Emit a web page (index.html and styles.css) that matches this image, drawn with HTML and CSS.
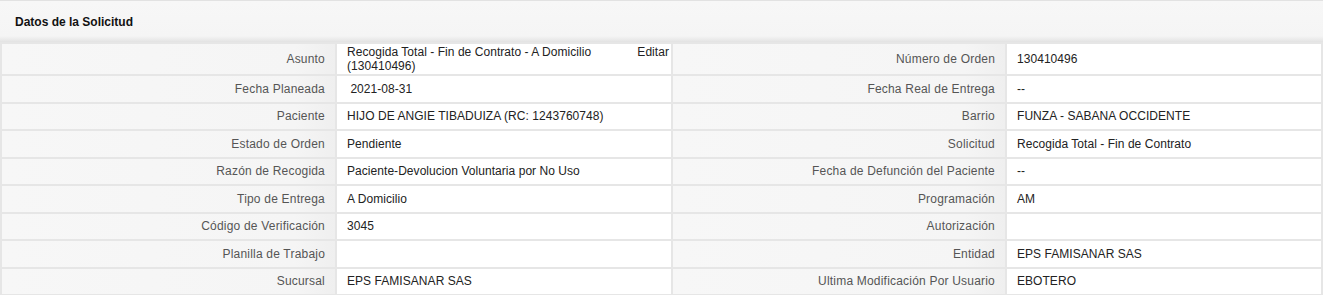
FILE: index.html
```html
<!DOCTYPE html>
<html lang="es">
<head>
<meta charset="utf-8">
<link rel="stylesheet" href="styles.css">
</head>
<body>
<div class="panel">
  <div class="panel-head">Datos de la Solicitud</div>
  <table class="details">
    <colgroup>
      <col class="c1"><col class="c2"><col class="c3"><col class="c4">
    </colgroup>
    <tr class="tall">
      <th>Asunto</th>
      <td class="subject"><span class="edit">Editar</span>Recogida Total - Fin de Contrato - A Domicilio (130410496)</td>
      <th>Número de Orden</th>
      <td>130410496</td>
    </tr>
    <tr><th>Fecha Planeada</th><td>&nbsp;2021-08-31</td><th>Fecha Real de Entrega</th><td>--</td></tr>
    <tr><th>Paciente</th><td>HIJO DE ANGIE TIBADUIZA (RC: 1243760748)</td><th>Barrio</th><td>FUNZA - SABANA OCCIDENTE</td></tr>
    <tr><th>Estado de Orden</th><td>Pendiente</td><th>Solicitud</th><td>Recogida Total - Fin de Contrato</td></tr>
    <tr><th>Razón de Recogida</th><td>Paciente-Devolucion Voluntaria por No Uso</td><th>Fecha de Defunción del Paciente</th><td>--</td></tr>
    <tr><th>Tipo de Entrega</th><td>A Domicilio</td><th>Programación</th><td>AM</td></tr>
    <tr><th>Código de Verificación</th><td>3045</td><th>Autorización</th><td></td></tr>
    <tr><th>Planilla de Trabajo</th><td></td><th>Entidad</th><td>EPS FAMISANAR SAS</td></tr>
    <tr><th>Sucursal</th><td>EPS FAMISANAR SAS</td><th>Ultima Modificación Por Usuario</th><td>EBOTERO</td></tr>
  </table>
</div>
</body>
</html>
```

FILE: styles.css
```css
html, body {
  margin: 0;
  padding: 0;
  background: #ffffff;
}
body {
  font-family: "Liberation Sans", Arial, sans-serif;
  font-size: 12px;
  color: #222;
}
.panel {
  width: 1323px;
}
.panel-head {
  height: 43px;
  box-sizing: border-box;
  padding: 14px 0 0 15px;
  font-weight: bold;
  color: #111;
  border-top: 1px solid #e2e2e2;
  background: linear-gradient(to bottom, #f7f7f7 0, #f5f5f5 35px, #e9e9e9 39px, #dcdcdc 43px);
}
.details {
  border-collapse: separate;
  border-spacing: 2px;
  background: #e6e6e6;
  width: 1323px;
  table-layout: fixed;
  margin-top: -1px;
}
.c1 { width: 333px; }
.c2 { width: 334px; }
.c3 { width: 332px; }
.c4 { width: 314px; }
.details tr {
  height: 25.5px;
}
.details tr.tall {
  height: 30px;
}
.details th,
.details td {
  padding: 0 10px;
  line-height: 14px;
  vertical-align: middle;
  font-weight: normal;
}
.details th {
  text-align: right;
  color: #555;
  letter-spacing: 0.2px;
  background: linear-gradient(to right, #f7f7f7 0, #f5f5f5 88%, #efefef 100%);
}
.details td {
  text-align: left;
  color: #222;
  letter-spacing: 0.05px;
  background: #ffffff;
}
.details td.subject {
  vertical-align: top;
  padding-top: 1px;
  padding-right: 0;
}
.edit {
  float: right;
  padding-right: 2px;
  margin-left: 30px;
}
```
